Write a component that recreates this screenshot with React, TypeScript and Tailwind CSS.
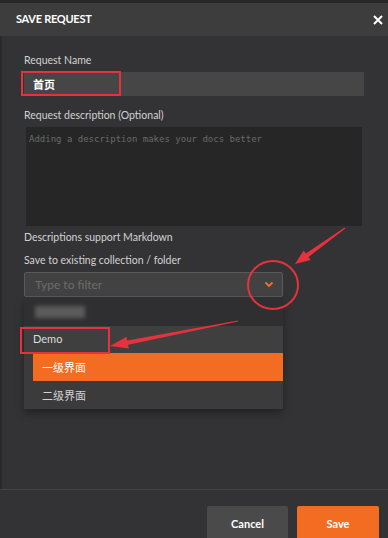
import React from "react";

type Pt = [number, number];

// tapered annotation arrow: thin tail, thick near the head
const arrowPoints = (tail: Pt, tip: Pt, head: number, half: number) => {
  const dx = tip[0] - tail[0];
  const dy = tip[1] - tail[1];
  const len = Math.hypot(dx, dy);
  const ux = dx / len;
  const uy = dy / len;
  const nx = -uy;
  const ny = ux;
  const bx = tip[0] - ux * head;
  const by = tip[1] - uy * head;
  const p = (x: number, y: number) => `${x.toFixed(1)},${y.toFixed(1)}`;
  return [
    p(tail[0] + nx * 0.6, tail[1] + ny * 0.6),
    p(bx + nx * 2.2, by + ny * 2.2),
    p(bx + nx * half, by + ny * half),
    p(tip[0], tip[1]),
    p(bx - nx * half, by - ny * half),
    p(bx - nx * 2.2, by - ny * 2.2),
    p(tail[0] - nx * 0.6, tail[1] - ny * 0.6),
  ].join(" ");
};

const Annotations = () => (
  <svg className="absolute inset-0 pointer-events-none" width="388" height="538">
    <rect x="22" y="72" width="98" height="23" fill="none" stroke="#e5323d" strokeWidth="2" />
    <rect x="21" y="328" width="88" height="25" fill="none" stroke="#e5323d" strokeWidth="2" />
    <ellipse cx="273" cy="285" rx="25" ry="24" fill="none" stroke="#e5323d" strokeWidth="2" />
    <polygon points={arrowPoints([345, 228], [295, 264], 15, 6)} fill="#e5323d" />
    <polygon points={arrowPoints([238, 321], [110, 346], 18, 6)} fill="#e5323d" />
  </svg>
);

export default function App() {
  return (
    <div className="relative w-[388px] h-[538px] overflow-hidden bg-[#333235] font-['Lato','Noto_Sans_CJK_SC',sans-serif] text-[10.5px] text-[#d2d2d2] flex flex-col">
      <div className="h-[3px] bg-[#282828]" />
      <div className="h-[33px] bg-[#3d3d3d] flex items-center justify-between pl-4 pr-[5px]">
        <span className="text-white font-bold text-[11px] tracking-tight">SAVE REQUEST</span>
        <svg width="10" height="10" viewBox="0 0 10 10">
          <path d="M1 1 L9 9 M9 1 L1 9" stroke="#fff" strokeWidth="2" />
        </svg>
      </div>

      <div className="flex-1 flex flex-col px-6 pt-[17px] border-l-[2px] border-[#2a2a2a]">
        <div className="h-[14px] leading-[14px] -ml-[2px]">Request Name</div>
        <div className="mt-[5px] h-[24px] -ml-[2px] bg-[#464646] flex items-center pl-[9px] text-white font-['Noto_Sans_CJK_SC',sans-serif] font-bold text-[11px]">
          首页
        </div>

        <div className="mt-[12px] h-[14px] leading-[14px] -ml-[2px]">Request description (Optional)</div>
        <div className="mt-[5px] h-[99px] bg-[#262626] ml-0 mr-[2px] pl-[3px] pt-[6px] font-['DejaVu_Sans_Mono',monospace] text-[9px] text-[#6a6a6a]">
          Adding a description makes your docs better
        </div>

        <div className="mt-[4px] h-[14px] leading-[14px] -ml-[2px]">Descriptions support Markdown</div>
        <div className="mt-[9px] h-[14px] leading-[14px] -ml-[2px]">Save to existing collection / folder</div>

        <div className="mt-[5px] -ml-[2px] w-[259px] h-[25px] bg-[#424242] border border-[#595959] rounded-[2px] flex items-center justify-between pl-[10px] pr-[8px]">
          <span className="text-[#6c6c6c] text-[12px]">Type to filter</span>
          <svg width="10" height="7" viewBox="0 0 10 7">
            <path d="M1.5 1.5 L5 5 L8.5 1.5" fill="none" stroke="#e8742c" strokeWidth="1.8" />
          </svg>
        </div>

        <div className="mt-[1px] -ml-[2px] w-[259px] flex flex-col shadow-[0_4px_8px_rgba(0,0,0,0.35)]">
          <div className="h-[28px] bg-[#2f2e30] flex items-center pl-[11px]">
            <div className="w-[50px] h-[12px] bg-[#5c5c5c] blur-[2px]" />
          </div>
          <div className="h-[27px] bg-[#3f3f3f] flex items-center pl-[9px] text-[#dcdcdc] text-[11px]">Demo</div>
          <div className="flex bg-[#3b3b3b]">
            <div className="w-[9px]" />
            <div className="flex-1 flex flex-col">
              <div className="h-[28px] bg-[#f26d22] flex items-center pl-[9px] text-white font-['Noto_Sans_CJK_SC',sans-serif] text-[11px]">
                一级界面
              </div>
              <div className="h-[28px] flex items-center pl-[9px] text-[#d2d2d2] font-['Noto_Sans_CJK_SC',sans-serif] text-[11px]">
                二级界面
              </div>
            </div>
          </div>
        </div>
      </div>

      <div className="h-[49px] border-t border-[#444] flex justify-end items-start gap-[9px] pt-[16px] pr-[9px]">
        <button className="w-[81px] h-[36px] bg-[#4a4a4a] rounded-[2px] text-white font-bold text-[11px]">Cancel</button>
        <button className="w-[82px] h-[36px] bg-[#f26d22] rounded-[2px] text-white font-bold text-[11px]">Save</button>
      </div>

      <Annotations />
    </div>
  );
}
